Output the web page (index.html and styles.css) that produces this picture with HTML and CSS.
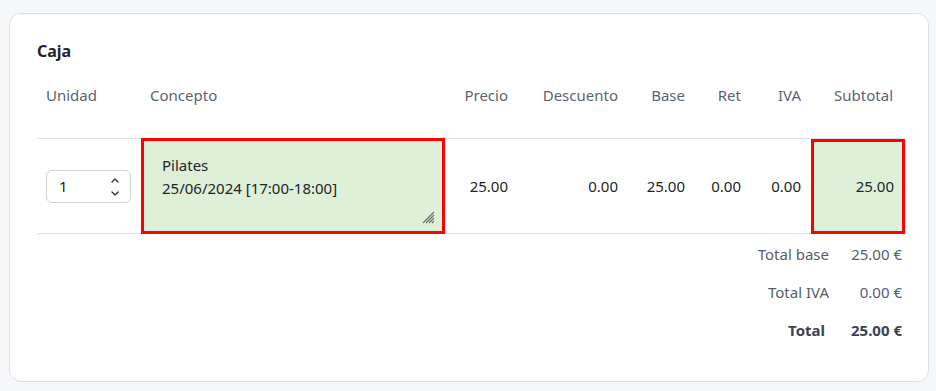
FILE: index.html
```html
<!DOCTYPE html>
<html lang="es">
<head>
  <meta charset="UTF-8">
  <title>Caja</title>
  <link rel="stylesheet" href="styles.css">
</head>
<body>
  <div class="card">
    <h2 class="card-title">Caja</h2>

    <table class="lines">
      <thead>
        <tr>
          <th class="col-unit">Unidad</th>
          <th class="col-concept">Concepto</th>
          <th class="col-price num">Precio</th>
          <th class="col-disc num">Descuento</th>
          <th class="col-base num">Base</th>
          <th class="col-ret num">Ret</th>
          <th class="col-iva num">IVA</th>
          <th class="col-sub num">Subtotal</th>
        </tr>
      </thead>
      <tbody>
        <tr>
          <td class="col-unit">
            <div class="qty">
              <input type="text" class="qty-input" value="1">
              <svg class="qty-spin" width="10" height="22" viewBox="0 0 10 22">
                <path d="M2 6 L5 3 L8 6" fill="none" stroke="#333" stroke-width="1.4" stroke-linecap="round" stroke-linejoin="round"/>
                <path d="M2 16 L5 19 L8 16" fill="none" stroke="#333" stroke-width="1.4" stroke-linecap="round" stroke-linejoin="round"/>
              </svg>
            </div>
          </td>
          <td class="col-concept concept-cell">
            <div class="concept">
              <textarea class="concept-text">Pilates
25/06/2024 [17:00-18:00]</textarea>
              <svg class="grip" width="14" height="14" viewBox="0 0 14 14">
                <path d="M13 2 L2 13 M13 5 L5 13 M13 8 L8 13 M13 11 L11 13" stroke="#6b6b6b" stroke-width="1.1"/>
              </svg>
            </div>
          </td>
          <td class="num">25.00</td>
          <td class="num">0.00</td>
          <td class="num">25.00</td>
          <td class="num">0.00</td>
          <td class="num">0.00</td>
          <td class="num highlight">25.00</td>
        </tr>
      </tbody>
    </table>

    <div class="totals">
      <span class="t-label">Total base</span>
      <span class="t-value">25.00 €</span>
      <span class="t-label">Total IVA</span>
      <span class="t-value">0.00 €</span>
      <span class="t-label strong">Total</span>
      <span class="t-value strong">25.00 €</span>
    </div>
  </div>
</body>
</html>
```

FILE: styles.css
```css
body {
  margin: 13px 7px 10px 9px;
  background-color: #f6f7f9;
  font-family: "Noto Sans", "Open Sans", sans-serif;
  font-size: 15px;
  color: #212529;
}

.card {
  background-color: #fff;
  border: 1px solid #dcdfe6;
  border-radius: 12px;
  padding: 26px 24px 32px 27px;
}

.card-title {
  margin: 0;
  font-size: 16px;
  line-height: 22px;
  font-weight: 700;
  color: #1f2329;
}

.lines {
  width: 867px;
  border-collapse: collapse;
  table-layout: fixed;
}

.lines th,
.lines td {
  box-sizing: border-box;
}

.lines th {
  font-weight: 400;
  color: #5a6473;
  text-align: left;
  line-height: 22px;
  padding: 22px 9px 32px;
  border-bottom: 1px solid #dee2e6;
}

.lines th.col-sub {
  padding-right: 11px;
}

.lines td {
  padding: 0 9px;
  height: 94px;
  line-height: 22px;
  vertical-align: middle;
  border-bottom: 1px solid #dee2e6;
}

.lines .num {
  text-align: right;
}

.col-unit { width: 104px; }
.col-concept { width: 304px; }
.col-price { width: 72px; }
.col-disc { width: 110px; }
.col-base { width: 67px; }
.col-ret { width: 56px; }
.col-iva { width: 60px; }
.col-sub { width: 94px; }

.qty {
  position: relative;
  width: 85px;
}

.qty-input {
  box-sizing: border-box;
  width: 85px;
  height: 33px;
  border: 1px solid #ccd2da;
  border-radius: 6px;
  padding: 0 12px;
  font: inherit;
  color: #212529;
  outline: none;
}

.qty-spin {
  position: absolute;
  right: 11px;
  top: 6px;
}

.lines td.concept-cell {
  padding: 0;
}

.concept {
  position: relative;
}

.concept-text {
  display: block;
  box-sizing: border-box;
  width: 304px;
  height: 96px;
  margin: -1px 0;
  border: 3px solid #f00;
  background-color: #dff0d8;
  padding: 13px 18px;
  font: inherit;
  line-height: 23px;
  color: #212529;
  resize: none;
  outline: none;
}

.grip {
  position: absolute;
  right: 10px;
  bottom: 10px;
}

.lines td.highlight {
  background-color: #dff0d8;
  outline: 3px solid #f00;
  outline-offset: -3px;
  padding-right: 11px;
  position: relative;
  left: 1px;
}

.totals {
  display: grid;
  grid-template-columns: auto auto;
  justify-content: end;
  column-gap: 22px;
  padding: 1px 2px 0 0;
}

.totals span {
  line-height: 22px;
  padding: 8px 0;
  text-align: right;
  color: #555e6b;
}

.totals .strong {
  font-weight: 700;
  color: #3c4350;
}

.totals .t-label.strong {
  margin-right: 4px;
}
```
